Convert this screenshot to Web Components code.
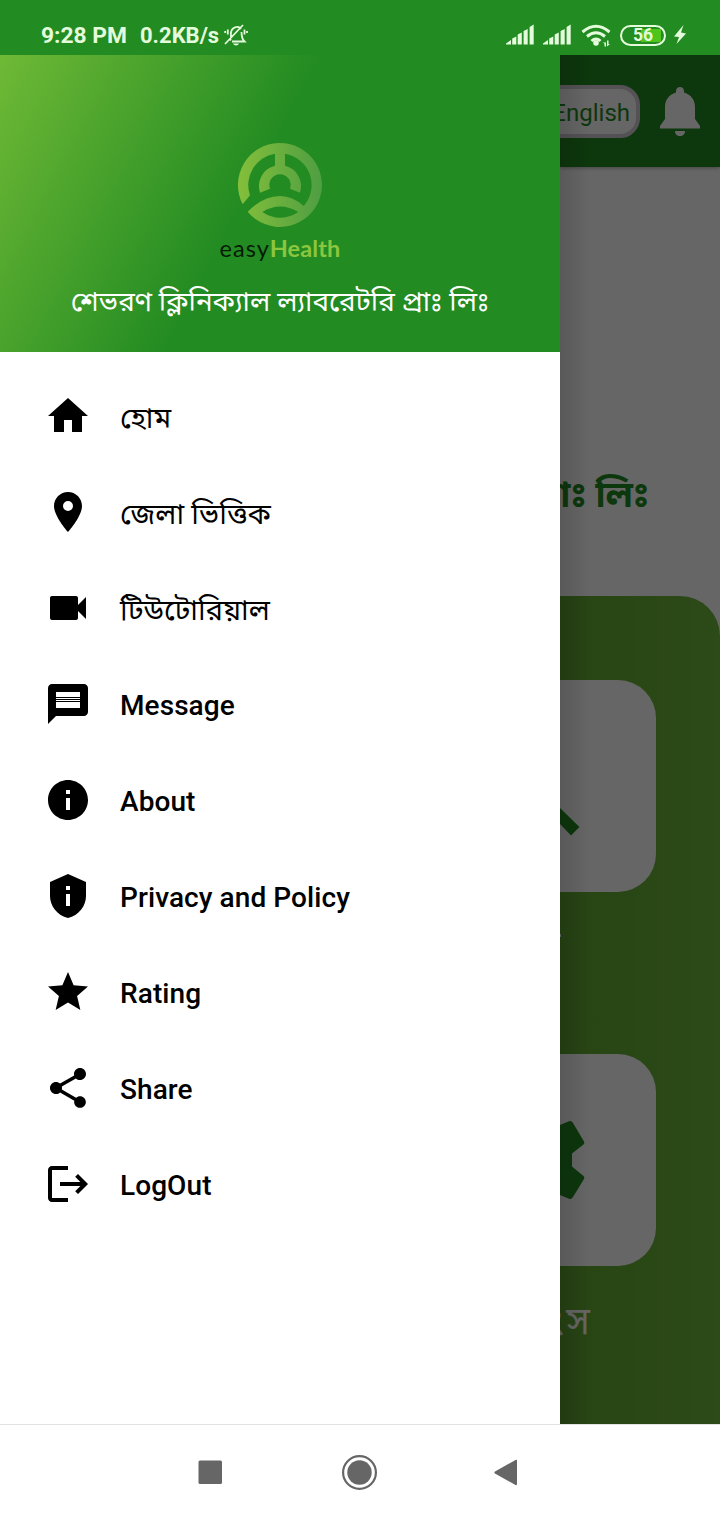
<!DOCTYPE html>
<html lang="bn">
<head>
<meta charset="utf-8">
<title>easyHealth</title>
<style>
html,body{margin:0;padding:0;background:#fff}
body{font-family:Roboto,"Noto Sans Bengali","Noto Sans",sans-serif}
</style>
</head>
<body>
<phone-screen>
  <status-bar slot="status"></status-bar>
  <nav-drawer slot="drawer">
    <drawer-header slot="header">শেভরণ ক্লিনিক্যাল ল্যাবরেটরি প্রাঃ লিঃ</drawer-header>
    <menu-item icon="home" bengali>হোম</menu-item>
    <menu-item icon="place" bengali>জেলা ভিত্তিক</menu-item>
    <menu-item icon="video" bengali>টিউটোরিয়াল</menu-item>
    <menu-item icon="message">Message</menu-item>
    <menu-item icon="info">About</menu-item>
    <menu-item icon="shield">Privacy and Policy</menu-item>
    <menu-item icon="star">Rating</menu-item>
    <menu-item icon="share">Share</menu-item>
    <menu-item icon="logout">LogOut</menu-item>
  </nav-drawer>
  <home-page slot="page"></home-page>
  <system-nav slot="nav"></system-nav>
</phone-screen>
<script>
const define=(name,html,init)=>customElements.define(name,class extends HTMLElement{
  constructor(){super();this.attachShadow({mode:'open'}).innerHTML=html;}
  connectedCallback(){if(init)init(this,this.shadowRoot);}
});

define('phone-screen',`<style>
:host{display:grid;grid-template-rows:55px 1369px 96px;width:720px;height:1520px;overflow:hidden}
main{display:grid;grid-template-columns:560px 160px;min-height:0}
</style><slot name="status"></slot><main><slot name="drawer"></slot><slot name="page"></slot></main><slot name="nav"></slot>`);

define('status-bar',`<style>
:host{display:flex;justify-content:space-between;box-sizing:border-box;height:55px;padding:15px 33px 0 41px;background:#228b22;color:#e4fbdc}
div{display:flex;align-items:center;height:40px}
span{font-size:22.800px;font-weight:700;line-height:40px;white-space:pre;padding-top:1px}
.t{width:99px}.k{width:84px;font-size:22px}
svg{display:block;flex:none}
.bat{box-sizing:border-box;display:flex;align-items:center;justify-content:center;width:46px;height:21px;border:2px solid #e4fbdc;border-radius:11px;margin:0 7px 0 3px;background:linear-gradient(#4fc41c,#4fc41c) 19px 2px/20px 13px no-repeat}
.bat span{font-size:17.500px;line-height:17px;padding:0}
</style>
<div><span class="t">9:28 PM</span><span class="k">0.2KB/s</span>
<svg width="24" height="24" viewBox="0 0 24 24" fill="none" stroke="#e4fbdc" stroke-width="1.8"><path d="M6 17.5C8 15 6.500 12 7 9.500 7.500 4.500 14 2 17 6M17.500 9c.2 4 0 6.500 3 9.500H8M1 21 19 2"/><path d="M3.800 6.500v5M1.200 8v2M20.500 6.500v5M23 8v2"/><path d="M9 20.500h6c-1 2.500-5 2.500-6 0Z" fill="#e4fbdc" stroke="none"/></svg></div>
<div><svg width="112" height="26" viewBox="505 22 112 26" fill="#e4fbdc">
<path d="M506 44.500v-1l5-3.500v4.500zM512.200 38.500l4.100-2v8h-4.100zM517.700 34.500l4.100-2v12h-4.100zM523.600 31l4.100-2v15.500h-4.100zM529.600 27l4.100-2.500v20h-4.100z"/>
<path transform="translate(37)" d="M506 44.500v-1l5-3.500v4.500zM512.200 38.500l4.100-2v8h-4.100zM517.700 34.500l4.100-2v12h-4.100zM523.600 31l4.100-2v15.500h-4.100zM529.600 27l4.100-2.500v20h-4.100z"/>
<g fill="none" stroke="#e4fbdc" stroke-width="3"><path d="M582.500 32q13.500-11.500 27 0M587 36.500q9-7.500 18 0M591.500 41q4.500-4 9 0"/></g><circle cx="596" cy="43" r="2.800"/><path d="M602.500 42.500h3.500v4h-1.500v-3zM607 40.500h1.500v3.500h1.500l-3 2.500z"/></svg>
<div class="bat"><span>56</span></div>
<svg width="14" height="22" viewBox="0 0 14 22" fill="#e4fbdc"><path d="M10.500 1 1 12.500l5 .5L3.500 20 13 9.500 8 8.500Z"/></svg></div>`);

define('nav-drawer',`<style>
:host{display:flex;flex-direction:column;background:#fff}
nav{display:flex;flex-direction:column;padding-top:16px}
</style><slot name="header"></slot><nav><slot></slot></nav>`);

define('drawer-header',`<style>
:host{display:flex;flex-direction:column;align-items:center;box-sizing:border-box;height:297px;padding-top:87px;background:linear-gradient(117.9deg,#6fb936 0%,#228b22 45%)}
svg{display:block}
.w{display:flex;margin-top:6px;font:23.500px/28px Lato,sans-serif;color:#071b07;white-space:nowrap}
.w span{letter-spacing:1px}
.w b{color:#8cc63f;letter-spacing:.1px}
p{margin:22px 0 0;font-size:27.800px;line-height:36px;color:#fff;white-space:nowrap}
</style>
<svg width="86" height="86" viewBox="111 35 258 258"><defs><linearGradient id="g"><stop stop-color="#84bf3b"/><stop offset="1" stop-color="#4f9e43"/></linearGradient></defs>
<path fill="url(#g)" fill-rule="evenodd" d="M128.100 222A126 126 0 1 1 143 244.400Q190 197 240 197Q278 197 311 227A95 95 0 0 0 255 70.200V106A63 63 0 0 1 300 187L270 175A32 32 0 1 0 210 175L180 187A63 63 0 0 1 225 106V70.200A95 95 0 0 0 150 195ZM187 245Q240 280 295 245Q240 212 187 245Z"/></svg>
<div class="w"><span>easy</span><b>Health</b></div>
<p><slot></slot></p>`);

const icons={
home:'<path d="M10 20v-6h4v6h5v-8h3L12 3 2 12h3v8z"/>',
place:'<path fill-rule="evenodd" d="M12 2C8.130 2 5 5.130 5 9c0 5.250 7 13 7 13s7-7.750 7-13c0-3.870-3.130-7-7-7zm0 9.500a2.500 2.500 0 1 1 0-5 2.500 2.500 0 0 1 0 5z"/>',
video:'<path d="M17 10.500V7c0-.55-.45-1-1-1H4c-.55 0-1 .45-1 1v10c0 .55.45 1 1 1h12c.55 0 1-.45 1-1v-3.500l4 4v-11z"/>',
message:'<path d="M20 2H4c-1.100 0-2 .9-2 2v18l4-4h14c1.100 0 2-.9 2-2V4c0-1.100-.9-2-2-2z"/><path fill="#fff" d="M6 6h12v2.500H6zM6 9h12v.5H6zM6 10h12v.5H6zM6 11h12v3H6z"/>',
info:'<path d="M12 2C6.480 2 2 6.480 2 12s4.480 10 10 10 10-4.480 10-10S17.520 2 12 2zm1 15h-2v-6h2zm0-8h-2V7h2z"/>',
shield:'<path fill-rule="evenodd" d="M12 1 3 5v7c0 5 3.600 9.800 9 11 5.400-1.200 9-6 9-11V5zM11 7h2v2h-2zM11 11h2v6h-2z"/>',
star:'<path d="M12 17.270 18.180 21l-1.640-7.030L22 9.240l-7.190-.61L12 2 9.190 8.630 2 9.240l5.460 4.730L5.820 21z"/>',
share:'<path d="M18 16.080c-.76 0-1.440.3-1.960.77L8.910 12.700c.05-.23.09-.46.09-.7s-.04-.47-.09-.7l7.050-4.110c.54.5 1.250.81 2.040.81 1.660 0 3-1.340 3-3s-1.340-3-3-3-3 1.340-3 3c0 .24.04.47.09.7L8.040 9.810C7.500 9.310 6.790 9 6 9c-1.660 0-3 1.340-3 3s1.340 3 3 3c.79 0 1.500-.31 2.040-.81l7.120 4.160c-.05.21-.08.43-.08.65 0 1.610 1.310 2.920 2.920 2.920s2.920-1.310 2.920-2.920-1.310-2.920-2.920-2.920z"/>',
logout:'<path d="M12 3H4c-1.100 0-2 .9-2 2v14c0 1.100.9 2 2 2h8v-2H4V5h8zM17 7l-1.410 1.410L18.170 11H8v2h10.170l-2.580 2.590L17 17l5-5z"/>'};
define('menu-item',`<style>
:host{display:flex;align-items:center;gap:28px;box-sizing:border-box;height:96px;padding-left:44px;color:#000}
svg{width:48px;height:48px;flex:none}
span{font-size:28px;font-weight:500;line-height:40px;letter-spacing:.080px;white-space:nowrap;padding-top:3px}
:host([bengali]) span{font-weight:400;font-size:28.900px;letter-spacing:0}
</style><svg viewBox="0 0 24 24"></svg><span><slot></slot></span>`,(el,r)=>{r.querySelector('svg').innerHTML=icons[el.getAttribute('icon')];});

define('tile-card',`<style>
:host{display:block;flex:none;width:96px;height:212px;border-radius:0 38px 38px 0;background:#fff;overflow:hidden}
svg{display:block}
</style><svg width="96" height="212" viewBox="0 0 96 212" fill="#228b22"></svg>`,(el,r)=>{
r.querySelector('svg').innerHTML=el.getAttribute('kind')==='search'
?'<path d="M0 128 19.500 147 11 155.500 0 144z"/>'
:'<path d="M0 71 9.500 67q2-.5 3.500 2l11 18.500q1 2-.5 3L12 99.500v13L23.500 122q1.500 1 .5 3L13 143q-1.500 2.500-3.500 2L0 141z"/>';});

define('home-page',`<style>
:host{display:flex;flex-direction:column;position:relative;width:160px;height:1369px;overflow:hidden;background:#fff}
header{display:flex;align-items:center;justify-content:flex-end;gap:20px;flex:none;box-sizing:border-box;height:112px;padding-right:20px;background:#228b22;box-shadow:0 1px 4px #0005}
.lang{box-sizing:border-box;flex:none;display:flex;align-items:center;justify-content:flex-end;width:110px;height:53px;padding:3px 6px 0 0;border:4px solid #d4ccd8;border-radius:20px;background:#fff;color:#228b22;font-size:24px}
header svg{flex:none;margin-top:2px}
h1{margin:0;height:429px;flex:none;box-sizing:border-box;padding:298px 71px 0 0;font-size:36px;line-height:60px;font-weight:700;color:#228b22;white-space:nowrap;display:flex;justify-content:flex-end}
section{flex:1;display:flex;flex-direction:column;box-sizing:border-box;padding-top:84px;border-radius:0 40px 0 0;background:linear-gradient(90deg,#62aa32,#70b93c)}
.l{height:162px;flex:none;box-sizing:border-box;color:#fff;font-size:38px;letter-spacing:3px;line-height:50px;display:flex;justify-content:flex-end;padding:30px 127px 0 0;white-space:nowrap}
.l.first{padding:42px 159px 0 0}
.dot{width:2px;height:3px;background:#fff}
.scrim{position:absolute;inset:0;background:linear-gradient(90deg,#0002,#0000 30px),rgba(0,0,0,.6)}
</style>
<header><div class="lang">English</div><svg width="40" height="50" viewBox="0 0 40 50" fill="#fff"><path d="M20 0c-2.500 0-4 1.700-4 4v1.500C9 7.500 5 13 5 20v12L0 39v2.500h40V39l-5-7V20c0-7-4-12.500-11-14.500V4c0-2.300-1.500-4-4-4zM15 44h10c0 3-2 5-5 5s-5-2-5-5z"/></svg></header>
<h1>প্রাঃ লিঃ</h1>
<section><tile-card kind="search"></tile-card><div class="l first"><i class="dot"></i></div><tile-card kind="gear"></tile-card><div class="l">ংস</div></section>
<div class="scrim"></div>`);

define('system-nav',`<style>
:host{display:flex;box-sizing:border-box;height:96px;border-top:1px solid #e2e2e2;background:#fff;align-items:flex-start;padding:27px 0 0 198px}
svg{display:block}
</style><svg width="322" height="40" viewBox="198 1452 322 40" fill="#666"><rect x="198.500" y="1460.500" width="23.500" height="23.500" rx="1.500"/><circle cx="359.500" cy="1472.500" r="12.200"/><circle cx="359.500" cy="1472.500" r="16.400" fill="none" stroke="#666" stroke-width="2.200"/><path d="M495 1471.500 515.500 1460q1.500-.6 1.500 1v23q0 1.600-1.500 1L495 1473.500q-1.300-1 0-2z"/></svg>`);
</script>
</body>
</html>
